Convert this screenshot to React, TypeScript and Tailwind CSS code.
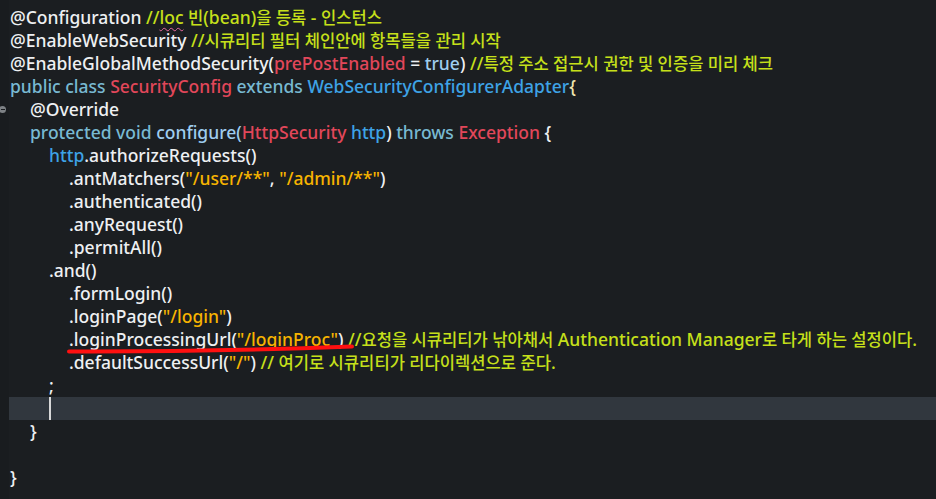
import React from 'react';

type Tok = [string, string];

const W = 'text-[#eef0f2]';
const CM = 'text-[#c6e01a]';
const KW = 'text-[#78b9d2]';
const RD = 'text-[#e2475a]';
const BL = 'text-[#3ea3e6]';
const LB = 'text-[#9fcdef]';
const ST = 'text-[#f7b400]';

const lines: { indent: number; toks: Tok[] }[] = [
    { indent: 0, toks: [['@Configuration ', W], ['//', CM], ['loc', CM + ' squiggle'], [' 빈(bean)을 등록 - 인스턴스', CM]] },
    { indent: 0, toks: [['@EnableWebSecurity ', W], ['//시큐리티 필터 체인안에 항목들을 관리 시작', CM]] },
    { indent: 0, toks: [['@EnableGlobalMethodSecurity(', W], ['prePostEnabled', RD], [' = ', W], ['true', LB], [') ', W], ['//특정 주소 접근시 권한 및 인증을 미리 체크', CM]] },
    { indent: 0, toks: [['public class ', KW], ['SecurityConfig ', RD], ['extends ', KW], ['WebSecurityConfigurerAdapter', BL], ['{', 'text-[#f0e6b0]']] },
    { indent: 1, toks: [['@Override', W]] },
    { indent: 1, toks: [['protected void ', KW], ['configure(', LB], ['HttpSecurity ', RD], ['http', BL], [') ', W], ['throws ', KW], ['Exception', RD], [' {', W]] },
    { indent: 2, toks: [['http', BL], ['.authorizeRequests()', W]] },
    { indent: 3, toks: [['.antMatchers(', W], ['"/user/**"', ST], [', ', W], ['"/admin/**"', ST], [')', W]] },
    { indent: 3, toks: [['.authenticated()', W]] },
    { indent: 3, toks: [['.anyRequest()', W]] },
    { indent: 3, toks: [['.permitAll()', W]] },
    { indent: 2, toks: [['.and()', W]] },
    { indent: 3, toks: [['.formLogin()', W]] },
    { indent: 3, toks: [['.loginPage(', W], ['"/login"', ST], [')', W]] },
    { indent: 3, toks: [['.loginProcessingUrl(', W], ['"/loginProc"', ST], [') ', W], ['//요청을 시큐리티가 낚아채서 Authentication Manager로 타게 하는 설정이다.', CM]] },
    { indent: 3, toks: [['.defaultSuccessUrl(', W], ['"/"', ST], [') ', W], ['// 여기로 시큐리티가 리다이렉션으로 준다.', CM]] },
    { indent: 2, toks: [[';', W]] },
    { indent: 2, toks: [] },
    { indent: 1, toks: [['}', W]] },
    { indent: 0, toks: [] },
    { indent: 0, toks: [['}', W]] },
];

// gutter is 9px, so text lands at 10 / 30 / 49 / 69
const indentCls = ['pl-[1px]', 'pl-[21px]', 'pl-[40px]', 'pl-[60px]'];

// hangul runs render a bit narrower than the latin ones in the editor font
const Hangul = ({ text }: { text: string }) => (
    <>
        {text.split(/([\uAC00-\uD7A3]+(?: [\uAC00-\uD7A3]+)*)/).map((part, k) =>
            /[\uAC00-\uD7A3]/.test(part) ? (
                <span key={k} className="text-[16.6px]">{part}</span>
            ) : (
                part
            )
        )}
    </>
);

export default function App() {
    return (
        <div className="relative w-[936px] h-[499px] overflow-hidden bg-[#1b1e21] font-['Noto_Sans','Noto_Sans_CJK_KR',sans-serif] text-[17.5px] font-medium">
            <div className="flex">
                <div className="w-[9px] shrink-0 bg-[#191c1f] pt-[6px] h-[499px]">
                    <div className="h-[23px] mt-[92px] flex items-center">
                        <div className="w-[7px] h-[7px] -ml-[1px] rounded-full bg-[#7d8185] flex items-center justify-center">
                            <div className="w-[4px] h-[1px] bg-[#1b1e21]" />
                        </div>
                    </div>
                </div>
                <div className="flex-1 pt-[6px]">
                    {lines.map((ln, i) => (
                        <div
                            key={i}
                            className={`h-[23px] flex items-center whitespace-pre ${indentCls[ln.indent]} ${i === 17 ? 'bg-[#31373e]' : ''}`}
                        >
                            {i === 17 && <span className="w-[2px] h-[23px] bg-[#d8d8d8]" />}
                            {ln.toks.map(([t, c], j) =>
                                c.includes('squiggle') ? (
                                    <span key={j} className={`${c.replace(' squiggle', '')} underline decoration-wavy decoration-[#e86aa0] decoration-1 underline-offset-[3px]`}>{t}</span>
                                ) : (
                                    <span key={j} className={c}><Hangul text={t} /></span>
                                )
                            )}
                        </div>
                    ))}
                </div>
            </div>
            {/* red pen mark under loginProcessingUrl */}
            <svg className="absolute left-0 top-0 pointer-events-none" width="936" height="499">
                <path d="M69 351.5 Q 210 352 352 346.5" stroke="#ff1010" strokeWidth="4" strokeLinecap="round" fill="none" />
            </svg>
        </div>
    );
}
